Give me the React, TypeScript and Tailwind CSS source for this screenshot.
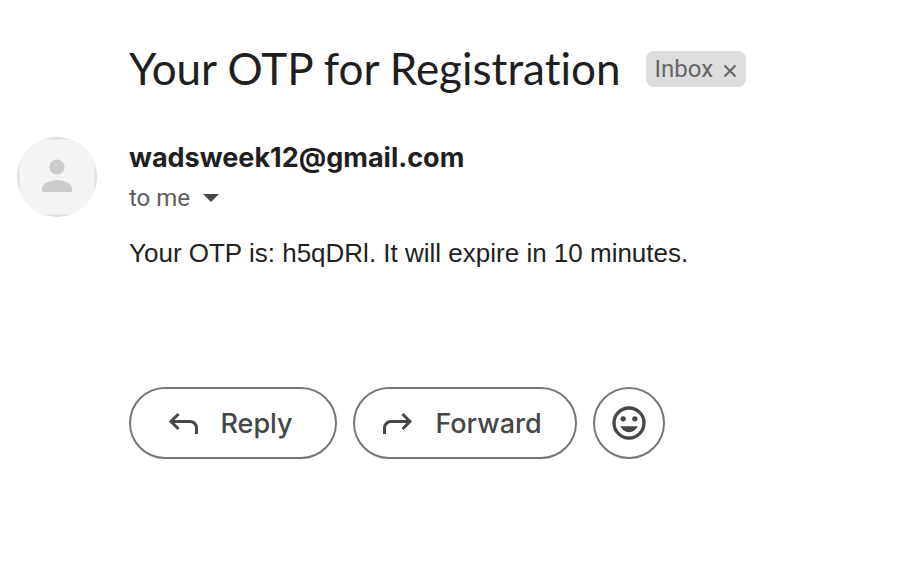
import React from "react";

function Avatar() {
  return (
    <svg viewBox="0 0 80 80" className="size-20 shrink-0" role="img" aria-label="Sender">
      <defs>
        <clipPath id="avatar-disc">
          <circle cx="40" cy="40" r="40" />
        </clipPath>
      </defs>
      <g clipPath="url(#avatar-disc)">
        <rect width="80" height="80" fill="#e0e0e0" />
        <rect x="2.5" y="2.5" width="75" height="75" fill="#f5f5f5" />
      </g>
      <circle cx="40" cy="30" r="7.6" fill="#cccccc" />
      <path d="M25 55v-4c0-5 10-8 15-8s15 3 15 8v4z" fill="#cccccc" />
    </svg>
  );
}

function ReplyIcon({ className = "" }: { className?: string }) {
  return (
    <svg
      viewBox="0 0 36 36"
      className={`size-9 shrink-0 ${className}`}
      fill="none"
      stroke="currentColor"
      strokeWidth="3"
      aria-hidden="true"
    >
      <path d="M13.500 8 6 15.500l7.500 7.500M6.500 15.500H25a6.500 6.500 0 0 1 6.500 6.500v6" />
    </svg>
  );
}

const pill =
  "flex h-18 items-center justify-center rounded-full border-2 border-[#747775] bg-white font-['Inter',sans-serif] text-[27px] leading-9 font-medium text-[#444746]";

export default function App() {
  return (
    <main className="min-h-screen bg-white pt-11 pr-4 pl-[17px] font-['Lato',sans-serif] text-[#1f1f1f]">
      <header className="flex flex-wrap items-start gap-x-[26px] pl-28">
        <h1 className="text-[44px] leading-12 [font-variant-ligatures:none]">Your OTP for Registration</h1>
        <span className="mt-[7px] flex h-9 items-center gap-[9px] rounded-lg bg-[#dddddd] px-2 font-['Roboto',sans-serif] text-2xl text-[#666666]">
          Inbox
          <button type="button" aria-label="Remove label Inbox" className="pt-1">
            <svg viewBox="0 0 16 16" className="size-4" fill="none" stroke="currentColor" strokeWidth="2" aria-hidden="true">
              <path d="m2.500 2.500 11 11m0-11-11 11" />
            </svg>
          </button>
        </span>
      </header>

      <article className="mt-[45px] flex gap-8">
        <Avatar />
        <div className="min-w-0 flex-1">
          <h2 className="font-['Inter',sans-serif] text-[27px] leading-[42px] font-bold">wadsweek12@gmail.com</h2>
          <div className="flex items-center gap-[13px] font-['Roboto',sans-serif] text-2xl leading-[38px] text-[#5e5e5e]">
            to me
            <button type="button" aria-label="Show details">
              <svg viewBox="0 0 16 8" className="h-2 w-4" fill="#444746" aria-hidden="true">
                <path d="M0 0h16L8 8z" />
              </svg>
            </button>
          </div>
          <p className="mt-4 font-['Liberation_Sans',Arial,sans-serif] text-[26px] leading-10 text-[#222222]">
            Your OTP is: h5qDRl. It will expire in 10 minutes.
          </p>
          <div className="mt-[114px] flex flex-wrap gap-4">
            <button type="button" className={`${pill} w-52 gap-[19px] pt-0.5 pr-2`}>
              <ReplyIcon />
              Reply
            </button>
            <button type="button" className={`${pill} w-56 gap-[19px] pt-0.5 pr-2`}>
              <ReplyIcon className="-scale-x-100" />
              Forward
            </button>
            <button type="button" aria-label="Add reaction" className={`${pill} w-18`}>
              <svg viewBox="0 0 24 24" className="size-10" fill="currentColor" aria-hidden="true">
                <path d="M12 2a10 10 0 1 0 0 20 10 10 0 0 0 0-20zm0 18a8 8 0 1 1 0-16 8 8 0 0 1 0 16z" />
                <circle cx="8.500" cy="9.500" r="1.600" />
                <circle cx="15.500" cy="9.500" r="1.600" />
                <path d="M12 17.500c2.330 0 4.310-1.460 5.110-3.500H6.890c.8 2.040 2.780 3.500 5.110 3.500z" />
              </svg>
            </button>
          </div>
        </div>
      </article>
    </main>
  );
}
